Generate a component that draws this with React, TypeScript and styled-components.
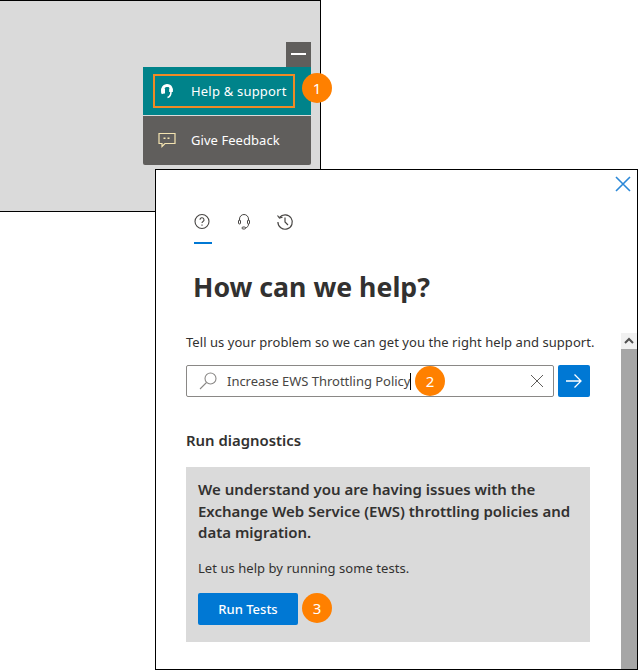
import React from "react";
import styled, { createGlobalStyle } from "styled-components";

const Global = createGlobalStyle`
  html, body { margin: 0; padding: 0; background: #fff; }
  body { font-family: "Noto Sans", "Open Sans", sans-serif; color: #323130; }
`;
const Canvas = styled.div`position: relative; width: 638px; height: 670px; overflow: hidden; background: #fff;`;
const BackWindow = styled.section`
  position: absolute; left: 0; top: 0; width: 321px; height: 212px; box-sizing: border-box;
  background: #dadada; border: 1px solid #000; border-left-width: 0;
  display: flex; flex-direction: column; align-items: flex-end; padding: 41px 9px 0 0;
`;
const Minimize = styled.div`
  width: 25px; height: 25px; background: #605e5c; display: flex; align-items: center; justify-content: center;
  &::before { content: ""; width: 15px; height: 2px; background: #fff; margin-top: -2px; }
`;
const Menu = styled.div`width: 168px; display: flex; flex-direction: column; gap: 1px;`;
const HelpRow = styled.div`
  height: 48px; background: #00838a; box-sizing: border-box; padding: 7px 16px 7px 10px; display: flex;
`;
const Focus = styled.div`
  flex: 1; border: 2px solid #f08a24; display: flex; align-items: center; padding-left: 6px; gap: 18px;
  color: #fff; font-size: 13px; letter-spacing: 0.2px; white-space: nowrap;
`;
const FeedbackRow = styled.div`
  height: 49px; background: #605e5c; border-radius: 0 0 2px 2px; box-sizing: border-box; display: flex; align-items: center;
  padding: 0 0 2px 15px; gap: 15px; color: #fff; font-size: 13px; letter-spacing: 0.05px; white-space: nowrap;
`;
const Badge = styled.div<{ $x: number; $y: number }>`
  position: absolute; left: ${p => p.$x}px; top: ${p => p.$y}px; width: 30px; height: 30px; border-radius: 50%;
  background: #ff8000; color: #fff; font-size: 15px; display: flex; align-items: center; justify-content: center; z-index: 3;
`;
const FrontWindow = styled.section`
  position: absolute; left: 155px; top: 169px; width: 483px; height: 501px; box-sizing: border-box;
  background: #fff; border: 1px solid #000; padding: 0 47px 0 30px; display: flex; flex-direction: column;
`;
const Close = styled.div`position: absolute; right: 5px; top: 5px; width: 18px; height: 18px; color: #2b88d8; svg { display: block; }`;
const Tabs = styled.div`display: flex; gap: 23px; padding: 43px 0 0 8px; height: 31px;`;
const Tab = styled.div<{ $active?: boolean }>`
  width: 18px; height: 31px; box-sizing: border-box; color: #484644;
  border-bottom: 2px solid ${p => (p.$active ? "#0078d4" : "transparent")};
  svg { display: block; }
`;
const Title = styled.h1`margin: 23px 0 0 7px; font-size: 26.7px; line-height: 40px; font-weight: 700; color: #323130; white-space: nowrap;`;
const Description = styled.p`margin: 25px 0 0; font-size: 13px; letter-spacing: 0.05px; line-height: 20px; white-space: nowrap; color: #323130;`;
const SearchRow = styled.div`display: flex; gap: 4px; margin-top: 13px;`;
const SearchBox = styled.div`
  width: 368px; height: 32px; box-sizing: border-box; border: 1px solid #8a8886; border-radius: 2px; display: flex; align-items: center;
  padding: 0 9px 0 11px; font-size: 13px; color: #484644; white-space: nowrap;
`;
const SearchText = styled.span`margin-left: 9px; flex: 1; display: flex; align-items: center; letter-spacing: -0.03px;`;
const Caret = styled.span`width: 1px; height: 17px; background: #000;`;
const Go = styled.div`
  width: 32px; height: 32px; background: #0078d4; border-radius: 2px; color: #fff; display: flex; align-items: center; justify-content: center;
`;
const SectionTitle = styled.h2`margin: 33px 0 0; font-size: 14.9px; line-height: 20px; font-weight: 600; color: #323130;`;
const Card = styled.div`margin-top: 17px; width: 404px; height: 175px; box-sizing: border-box; background: #dadada; padding: 12px 12px 0;`;
const CardHead = styled.p`margin: 0; font-size: 15px; line-height: 21.5px; font-weight: 600; color: #323130;`;
const CardText = styled.p`margin: 14px 0 0; font-size: 13px; letter-spacing: 0.05px; line-height: 20px; color: #323130; white-space: nowrap;`;
const RunButton = styled.div`
  margin-top: 15px; width: 100px; height: 32px; background: #0078d4; border-radius: 2px; color: #fff; font-size: 13px; font-weight: 500;
  display: flex; align-items: center; justify-content: center;
`;
const Scrollbar = styled.div`position: absolute; right: 0; top: 163px; bottom: 0; width: 16px; background: #a6a6a6;`;
const ScrollUp = styled.div`height: 16px; background: #f1f1f1; color: #505050; display: flex; align-items: center; justify-content: center; svg { display: block; }`;

export default function App() {
  return (
    <Canvas>
      <Global />
      <BackWindow>
        <Minimize />
        <Menu>
          <HelpRow>
            <Focus>
              <svg width="12" height="16" viewBox="0 0 12 16" fill="none" stroke="#fff" style={{ flex: "none" }}>
                <path d="M2.200 10.500C.8 8 1.200 2.800 6 2.300c4 0 4.600 3.500 4 6" strokeWidth="2.800" />
                <path d="M2.200 5.500v5M10 5.500v3.500" strokeWidth="3.600" />
                <path d="M10 8.500c0 3-1.500 5.500-3.500 6" strokeWidth="1.600" />
              </svg>
              Help &amp; support
            </Focus>
          </HelpRow>
          <FeedbackRow>
            <svg width="18" height="18" viewBox="0 0 18 18" fill="none" stroke="#f3e3b0" strokeWidth="1.2" style={{ flex: "none" }}>
              <path d="M1 2.500h16v10H7l-3 3v-3H1z" />
              <path d="M6.500 6.500v1.500M10.500 6.500v1.500" strokeWidth="2" />
            </svg>
            Give Feedback
          </FeedbackRow>
        </Menu>
      </BackWindow>
      <Badge $x={302} $y={73}>1</Badge>
      <FrontWindow>
        <Close>
          <svg width="18" height="18" viewBox="0 0 18 18" stroke="currentColor" strokeWidth="1.6" fill="none">
            <path d="M2 2l14 14M16 2L2 16" />
          </svg>
        </Close>
        <Tabs>
          <Tab $active>
            <svg width="16" height="17" viewBox="0 0 16 17" fill="none" stroke="currentColor" strokeWidth="1.100">
              <circle cx="8" cy="8.500" r="7" />
              <path d="M6 6.800a2 2 0 1 1 3 1.700c-.7.400-1 .8-1 1.600" />
              <path d="M8 11.500v1.200" />
            </svg>
          </Tab>
          <Tab>
            <svg width="18" height="17" viewBox="0 0 18 17" fill="none" stroke="currentColor" strokeWidth="1">
              <path d="M4.500 7.500V6a4.500 4.500 0 0 1 9 0v1.500" />
              <rect x="3.500" y="7" width="2" height="4" rx="1" />
              <rect x="12.500" y="7" width="2" height="4" rx="1" />
              <path d="M13.500 11c0 2-1 3.500-3 3.800" />
              <rect x="7" y="14" width="3.500" height="2" rx="1" />
            </svg>
          </Tab>
          <Tab>
            <svg width="18" height="18" viewBox="0 0 18 18" fill="none" stroke="currentColor" strokeWidth="1.200">
              <path d="M3.500 4.500a7.200 7.200 0 1 1-1.600 4.500" />
              <path d="M1.500 2.500l2 2.500 3-.8" />
              <path d="M9 4.500v4.500l3 3" />
            </svg>
          </Tab>
        </Tabs>
        <Title>How can we help?</Title>
        <Description>Tell us your problem so we can get you the right help and support.</Description>
        <SearchRow>
          <SearchBox>
            <svg width="20" height="18" viewBox="0 0 20 18" fill="none" stroke="#8a8886" strokeWidth="1.100" style={{ flex: "none" }}>
              <circle cx="12.500" cy="6.500" r="5.500" />
              <path d="M8.500 10.500L2 17" />
            </svg>
            <SearchText>Increase EWS Throttling Policy<Caret /></SearchText>
            <svg width="14" height="14" viewBox="0 0 14 14" fill="none" stroke="#605e5c" strokeWidth="1" style={{ flex: "none" }}>
              <path d="M1 1l12 12M13 1L1 13" />
            </svg>
          </SearchBox>
          <Go>
            <svg width="18" height="16" viewBox="0 0 18 16" fill="none" stroke="currentColor" strokeWidth="1.300">
              <path d="M1 8h15M9.500 1.500L16 8l-6.500 6.500" />
            </svg>
          </Go>
        </SearchRow>
        <SectionTitle>Run diagnostics</SectionTitle>
        <Card>
          <CardHead>We understand you are having issues with the Exchange Web Service (EWS) throttling policies and data migration.</CardHead>
          <CardText>Let us help by running some tests.</CardText>
          <RunButton>Run Tests</RunButton>
        </Card>
        <Scrollbar>
          <ScrollUp>
            <svg width="10" height="8" viewBox="0 0 10 8" fill="none" stroke="currentColor" strokeWidth="2"><path d="M1 6l4-4 4 4" /></svg>
          </ScrollUp>
        </Scrollbar>
      </FrontWindow>
      <Badge $x={415} $y={366}>2</Badge>
      <Badge $x={302} $y={593}>3</Badge>
    </Canvas>
  );
}
